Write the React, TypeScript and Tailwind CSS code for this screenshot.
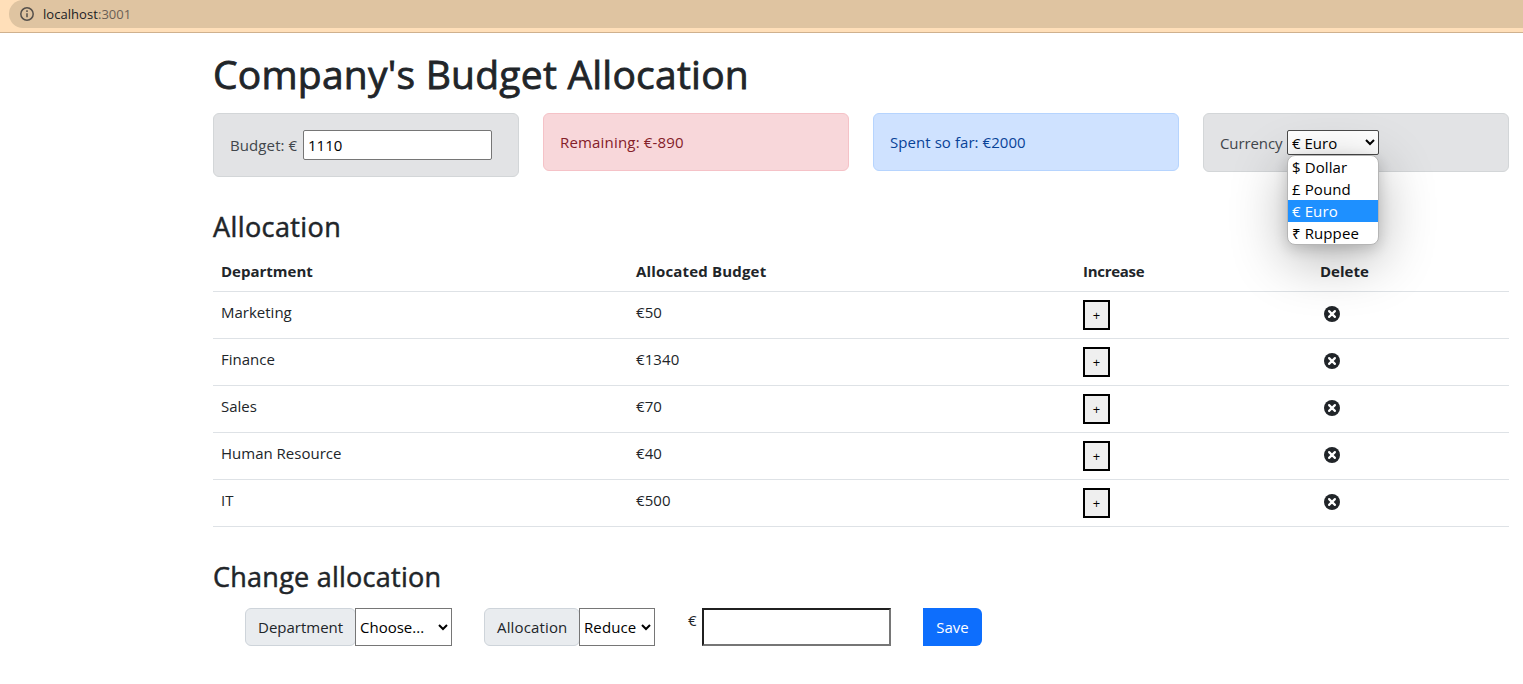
import type { ReactNode } from "react";

const rows = [
  { name: "Marketing", amount: "€50" },
  { name: "Finance", amount: "€1340" },
  { name: "Sales", amount: "€70" },
  { name: "Human Resource", amount: "€40" },
  { name: "IT", amount: "€500" },
];

const currencies = ["$ Dollar", "£ Pound", "€ Euro", "₹ Ruppee"];

function Card({ className, children }: { className: string; children: ReactNode }) {
  return <div className={`flex w-[306px] rounded-md border px-4 ${className}`}>{children}</div>;
}

function AddressBar() {
  return (
    <header className="flex h-[33px] border-b border-[#cfb18e] bg-[#ffdfb9] pl-[9px]">
      <div className="flex h-7 flex-1 items-center rounded-l-full bg-[#dfc4a1] pl-[11px]">
        <svg width="14" height="14" viewBox="0 0 14 14" fill="none" stroke="#55504b" strokeWidth="1.5">
          <circle cx="7" cy="7" r="6.2" />
          <path d="M7 6.2v4.1M7 3.3v1.6" />
        </svg>
        <span className="ml-[9px] text-[13px] tracking-[0.05px] text-[#202124]">
          localhost<span className="text-[#6b5f55]">:3001</span>
        </span>
      </div>
    </header>
  );
}

function DeleteIcon() {
  return (
    <svg width="16" height="16" viewBox="0 0 16 16" fill="#212529">
      <circle cx="8" cy="8" r="8" />
      <path d="M5.1 5.1l5.8 5.8M10.9 5.1l-5.8 5.8" stroke="white" strokeWidth="2.2" strokeLinecap="round" />
    </svg>
  );
}

export default function App() {
  return (
    <div className="h-[684px] overflow-hidden bg-white font-['Open_Sans','Noto_Sans',sans-serif] text-[15px] leading-6 text-[#212529]">
      <AddressBar />
      <main className="ml-[213px] w-[1296px] pt-4">
        <h1 className="h-12 text-[39px] leading-[50px] font-medium tracking-[0.23px] whitespace-nowrap [-webkit-text-stroke:0.8px_#212529]">Company's Budget Allocation</h1>
        <section className="mt-4 flex h-20 items-start gap-6">
          <Card className="h-16 items-center border-[#d3d6d8] bg-[#e2e3e5] text-[#41464b]">
            <label htmlFor="budget" className="w-[68px] tracking-[0.1px] whitespace-nowrap">Budget: €</label>
            <input id="budget" defaultValue="1110" className="ml-[5px] h-[30px] w-[189px] rounded-[2px] border border-[#767676] bg-white px-1 text-black" />
          </Card>
          <Card className="h-[58px] items-center border-[#f5c2c7] bg-[#f8d7da] tracking-[0.18px] text-[#842029]">Remaining: €-890</Card>
          <Card className="h-[58px] items-center border-[#b6d4fe] bg-[#cfe2ff] tracking-[0.06px] text-[#084298]">Spent so far: €2000</Card>
          <Card className="h-[59px] items-center border-[#d3d6d8] bg-[#e2e3e5] text-[#41464b]">
            <label htmlFor="currency" className="w-[63px] tracking-[-0.1px]">Currency</label>
            <div className="relative ml-1">
              <select id="currency" defaultValue="€ Euro" className="block h-[25px] w-[92px] rounded-[2px] border border-[#4a4a4a] bg-white text-black">
                {currencies.map((c) => <option key={c}>{c}</option>)}
              </select>
              <ul className="absolute top-[25px] left-0 z-10 w-[92px] overflow-hidden rounded-lg border border-[#b5b5b5] bg-white text-black shadow-[0_14px_55px_rgba(0,0,0,0.3),0_4px_14px_rgba(0,0,0,0.16)]">
                {currencies.map((c) => (
                  <li key={c} className={c === "€ Euro" ? "h-[22px] bg-[#1e90ff] pl-1 leading-[22px] tracking-[0.1px] text-white" : "h-[22px] pl-1 leading-[22px] tracking-[0.1px]"}>{c}</li>
                ))}
              </ul>
            </div>
          </Card>
        </section>

        <h3 className="mt-4 h-[34px] text-[27px] leading-9 font-medium tracking-[0.4px] [-webkit-text-stroke:0.5px_#212529]">Allocation</h3>
        <table className="mt-2 w-full table-fixed border-collapse text-left">
          <colgroup>
            <col className="w-[415px]" />
            <col className="w-[447px]" />
            <col className="w-[237px]" />
            <col className="w-[197px]" />
          </colgroup>
          <thead>
            <tr className="h-10 border-b border-[#dee2e6] font-bold">
              <th className="px-2">Department</th>
              <th className="px-2 tracking-[0.17px]">Allocated Budget</th>
              <th className="px-2 tracking-[-0.3px]">Increase</th>
              <th className="px-2">Delete</th>
            </tr>
          </thead>
          <tbody>
            {rows.map((r) => (
              <tr key={r.name} className="h-[47px] border-b border-[#dee2e6] align-top">
                <td className="px-2 pt-2">{r.name}</td>
                <td className="px-2 pt-2 tracking-[0.1px]">{r.amount}</td>
                <td className="px-2 pt-2">
                  <button className="block h-[30px] w-[27px] border-2 border-black bg-[#efefef] text-[13px] leading-[26px] text-black">+</button>
                </td>
                <td className="pt-3.5 pl-3"><DeleteIcon /></td>
              </tr>
            ))}
          </tbody>
        </table>

        <h3 className="mt-8 h-[34px] text-[27px] leading-9 font-medium tracking-[0.25px] [-webkit-text-stroke:0.5px_#212529]">Change allocation</h3>
        <div className="mt-[15px] ml-8 flex h-[38px]">
          <label htmlFor="department" className="flex w-[111px] items-center rounded-md border border-[#ced4da] bg-[#e9ecef] pl-3">Department</label>
          <select id="department" className="-ml-px w-[97px] border border-[#767676] bg-white text-black"><option>Choose...</option></select>
          <label htmlFor="action" className="ml-8 flex w-24 items-center rounded-md border border-[#ced4da] bg-[#e9ecef] pl-3 tracking-[0.15px]">Allocation</label>
          <select id="action" className="-ml-px w-[76px] border border-[#767676] bg-white tracking-[0.1px] text-black"><option>Reduce</option></select>
          <span className="ml-8 w-[15px] pl-px">€</span>
          <input aria-label="Amount" className="w-[189px] border-2 border-t-[#202020] border-r-[#767676] border-b-[#767676] border-l-[#202020] bg-white px-1" />
          <button className="ml-8 w-[59px] rounded-r-md bg-[#0d6efd] text-white">Save</button>
        </div>
      </main>
    </div>
  );
}
